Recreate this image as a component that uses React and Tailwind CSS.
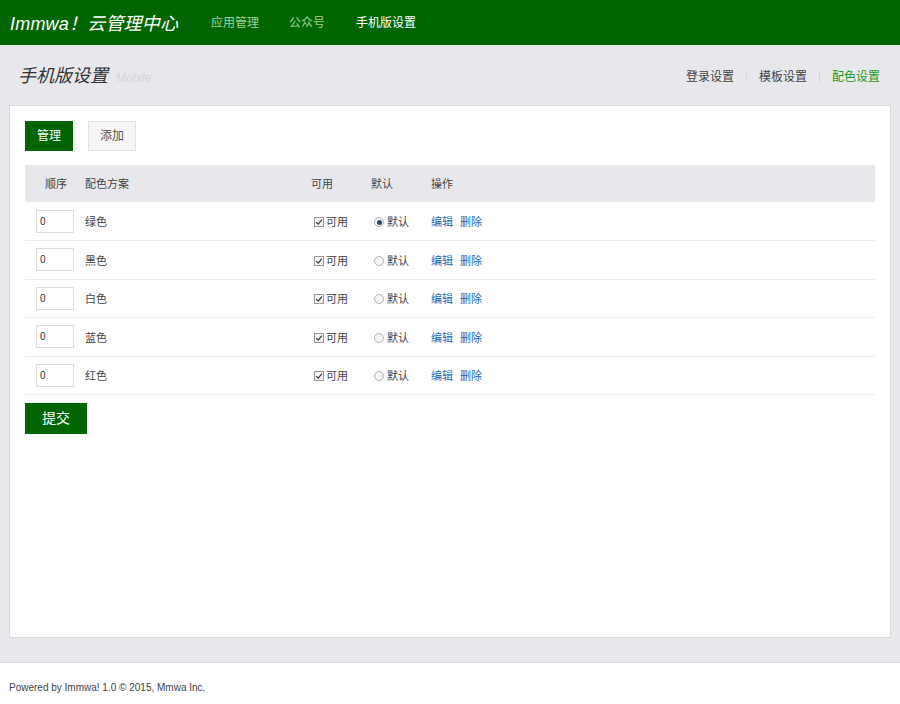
const rows = [
  { name: '绿色', def: true },
  { name: '黑色', def: false },
  { name: '白色', def: false },
  { name: '蓝色', def: false },
  { name: '红色', def: false },
];

const font = { fontFamily: '"Liberation Sans", "Noto Sans CJK SC", sans-serif' };

function Check() {
  return (
    <span className="w-[10px] h-[10px] border border-[#9a9a9a] bg-[#f4f4f4] flex items-center justify-center">
      <svg viewBox="0 0 10 10" className="w-[8px] h-[8px]">
        <path d="M1.5 5.2 L4 7.6 L8.6 2" fill="none" stroke="#333" strokeWidth="1.4" />
      </svg>
    </span>
  );
}

function Radio({ on }) {
  return (
    <span className="w-[10px] h-[10px] rounded-full border border-[#b4b4b4] bg-[#f6f6f6] flex items-center justify-center">
      {on && <span className="w-[5px] h-[5px] rounded-full bg-[#26487a]" />}
    </span>
  );
}

export default function App() {
  return (
    <div className="min-h-[704px] bg-white text-[#333]" style={font}>
      {/* Top bar */}
      <div className="h-[45px] bg-[#016601] flex items-center">
        <div className="pl-[10px] pt-[3px] text-[18px] italic text-white leading-none w-[211px] tracking-[0.2px]">Immwa！云管理中心</div>
        <div className="flex items-center text-[12px]">
          <span className="text-[#9fd19f]">应用管理</span>
          <span className="ml-[30px] text-[#9fd19f]">公众号</span>
          <span className="ml-[31px] text-white">手机版设置</span>
        </div>
      </div>

      {/* Gray area */}
      <div className="bg-[#e8e8ec] pb-[24px]">
        <div className="h-[60px] flex items-center justify-between pl-[18px] pr-[20px] pt-[4px]">
          <div className="flex items-baseline">
            <span className="text-[18px] italic text-[#333] leading-none">手机版设置</span>
            <span className="ml-[8px] text-[12px] italic text-[#d4d4d8]">Mobile</span>
          </div>
          <div className="flex items-center text-[12px] text-[#444]">
            <span>登录设置</span>
            <span className="mx-[12px] w-px h-[10px] bg-[#d6d6d6]" />
            <span>模板设置</span>
            <span className="mx-[12px] w-px h-[10px] bg-[#d6d6d6]" />
            <span className="text-[#1a9a1a]">配色设置</span>
          </div>
        </div>

        <div className="mx-[9px] h-[533px] bg-white border border-[#d9d9dc] px-[15px] pt-[15px]">
          <div className="flex gap-[15px]">
            <button className="w-[48px] h-[30px] bg-[#016601] text-white text-[12px]">管理</button>
            <button className="w-[48px] h-[30px] bg-[#f5f5f7] border border-[#e2e2e4] text-[#555] text-[12px]">添加</button>
          </div>

          <table className="mt-[14px] w-full text-[11px] border-collapse">
            <thead>
              <tr className="h-[37px] bg-[#e8e8ec] text-[#444]">
                <th className="w-[60px] text-center font-normal pl-[2px] pt-[2px]">顺序</th>
                <th className="w-[226px] text-left font-normal pt-[2px]">配色方案</th>
                <th className="w-[60px] text-left font-normal pt-[2px]">可用</th>
                <th className="w-[60px] text-left font-normal pt-[2px]">默认</th>
                <th className="text-left font-normal pt-[2px]">操作</th>
              </tr>
            </thead>
            <tbody>
              {rows.map((r, i) => (
                <tr key={i} className="h-[38.5px] border-b border-[#ececee]">
                  <td className="pl-[11px]">
                    <input
                      defaultValue="0"
                      className="w-[38px] h-[23px] border border-[#dcdcdc] px-[3px] text-[10px] outline-none"
                    />
                  </td>
                  <td className="text-[#444] pt-[2px]">{r.name}</td>
                  <td className="pt-[2px]">
                    <span className="flex items-center gap-[2px] pl-[3px] text-[#444]">
                      <Check />
                      可用
                    </span>
                  </td>
                  <td className="pt-[2px]">
                    <span className="flex items-center gap-[3px] pl-[3px] text-[#444]">
                      <Radio on={r.def} />
                      默认
                    </span>
                  </td>
                  <td className="pt-[2px]">
                    <span className="text-[#2468b5]">编辑</span>
                    <span className="ml-[7px] text-[#2468b5]">删除</span>
                  </td>
                </tr>
              ))}
            </tbody>
          </table>

          <button className="mt-[8px] w-[62px] h-[31px] bg-[#016601] text-white text-[14px]">提交</button>
        </div>
      </div>

      {/* Footer */}
      <div className="border-t border-[#dcdcdf] h-[42px] flex items-center pl-[9px] pt-[8px] text-[10px] text-[#444]">
        Powered by Immwa! 1.0 © 2015, Mmwa Inc.
      </div>
    </div>
  );
}
